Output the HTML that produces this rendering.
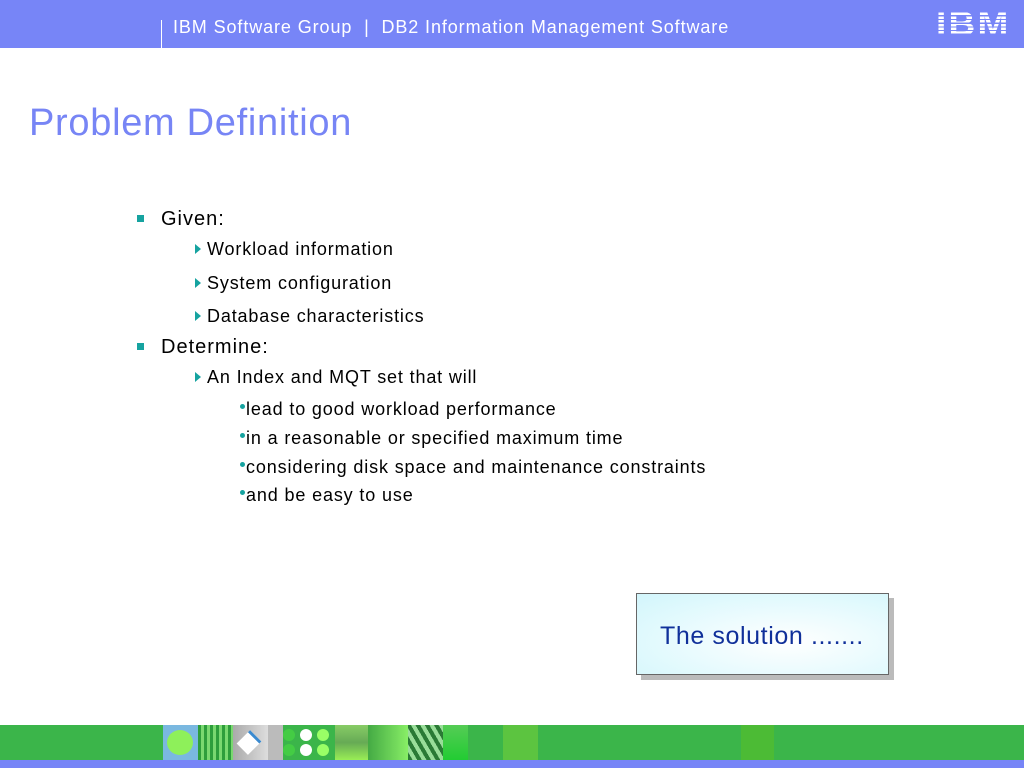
<!DOCTYPE html>
<html><head><meta charset="utf-8"><style>
body{margin:0;width:1024px;height:768px;position:relative;background:#fff;font-family:"Liberation Sans",sans-serif;overflow:hidden}
.hdr{position:absolute;left:0;top:0;width:1024px;height:48px;background:#7785f7}
.hdr .t{position:absolute;left:173px;top:17px;color:#fff;font-size:18px;letter-spacing:0.9px}
.bar{position:absolute;background:#fff;width:1px}
.ibm{position:absolute;left:936px;top:9px;width:74px;height:30px;color:#fff;font:bold 33px "Liberation Sans",sans-serif;letter-spacing:2px;line-height:30px;transform:scaleX(1.12);transform-origin:left}
.ibmw{position:absolute;left:936px;top:9px;width:74px;height:30px;background:repeating-linear-gradient(to bottom,transparent 0 2.5px,#7785f7 2.5px 3.7px)}
h1{position:absolute;left:29px;top:102px;margin:0;font-weight:normal;font-size:38px;color:#7785f5;letter-spacing:0.7px}
.l1{position:absolute;left:161px;font-size:20px;color:#000;letter-spacing:1px}
.l1:before{content:"";position:absolute;left:-24px;top:7px;width:7px;height:7px;background:#16a3a0}
.l2{position:absolute;left:207px;font-size:18px;color:#000;letter-spacing:0.85px}
.l2:before{content:"";position:absolute;left:-12px;top:5px;border-left:6px solid #16a3a0;border-top:5px solid transparent;border-bottom:5px solid transparent}
.l3{position:absolute;left:246px;font-size:18px;color:#000;letter-spacing:0.86px}
.l3 b{position:absolute;left:-6px;top:5px;width:5px;height:5px;border-radius:50%;background:#16a3a0}
.box{position:absolute;left:636px;top:593px;width:251px;height:80px;border:1px solid #666;background:radial-gradient(ellipse at 60% 60%,#fff 0%,#dff9fd 70%,#d2f5fb 100%);box-shadow:5px 5px 0 #bbb}
.box span{position:absolute;left:23px;top:28px;font-size:25px;color:#10309a;letter-spacing:0.6px}
.foot{position:absolute;left:0;top:725px;width:1024px;height:35px;background:#3bb54a}
.fb{position:absolute;left:0;top:760px;width:1024px;height:8px;background:#7785f7}
.s{position:absolute;top:0;height:35px}
</style></head><body>
<div class="hdr">
<div class="bar" style="left:161px;top:20px;height:28px"></div>
<div class="t">IBM Software Group &nbsp;|&nbsp; DB2 Information Management Software</div>
<div class="ibm">IBM</div><div class="ibmw"></div>
</div>
<h1>Problem Definition</h1>
<div class="l1" style="top:208px">Given:</div>
<div class="l2" style="top:239px">Workload information</div>
<div class="l2" style="top:273px">System configuration</div>
<div class="l2" style="top:306px">Database characteristics</div>
<div class="l1" style="top:336px">Determine:</div>
<div class="l2" style="top:367px">An Index and MQT set that will</div>
<div class="l3" style="top:399px"><b></b>lead to good workload performance</div>
<div class="l3" style="top:428px"><b></b>in a reasonable or specified maximum time</div>
<div class="l3" style="top:457px"><b></b>considering disk space and maintenance constraints</div>
<div class="l3" style="top:485px"><b></b>and be easy to use</div>
<div class="box"><span>The solution .......</span></div>
<div class="foot">
<div class="s" style="left:163px;width:35px;background:#7ab8e0"><div style="position:absolute;left:4px;top:5px;width:26px;height:25px;border-radius:50%;background:#8ef05a"></div></div>
<div class="s" style="left:198px;width:35px;background:repeating-linear-gradient(90deg,#2e9e3c 0 3px,#7ad870 3px 6px)"></div>
<div class="s" style="left:233px;width:35px;background:linear-gradient(90deg,#aaa,#ddd)"><div style="position:absolute;left:8px;top:8px;width:16px;height:16px;background:#fff;transform:rotate(45deg);border-top:3px solid #3a8ad0"></div></div>
<div class="s" style="left:268px;width:15px;background:#bbb"></div>
<div class="s" style="left:283px;width:52px;background:#3bb54a">
<div style="position:absolute;left:0;top:4px;width:12px;height:12px;border-radius:50%;background:#4c4"></div>
<div style="position:absolute;left:17px;top:4px;width:12px;height:12px;border-radius:50%;background:#fff"></div>
<div style="position:absolute;left:34px;top:4px;width:12px;height:12px;border-radius:50%;background:#9f6"></div>
<div style="position:absolute;left:0;top:19px;width:12px;height:12px;border-radius:50%;background:#4c4"></div>
<div style="position:absolute;left:17px;top:19px;width:12px;height:12px;border-radius:50%;background:#fff"></div>
<div style="position:absolute;left:34px;top:19px;width:12px;height:12px;border-radius:50%;background:#9f6"></div></div>
<div class="s" style="left:335px;width:33px;background:linear-gradient(#8c6 0,#6a5 50%,#9e5 100%)"></div>
<div class="s" style="left:368px;width:40px;background:linear-gradient(90deg,#4a4,#8e6)"></div>
<div class="s" style="left:408px;width:35px;background:repeating-linear-gradient(60deg,#2a7a35 0 4px,#9d9 4px 8px)"></div>
<div class="s" style="left:443px;width:25px;background:linear-gradient(#5c5,#2c3)"></div>
<div class="s" style="left:503px;width:35px;background:#5cc440"></div>
<div class="s" style="left:741px;width:33px;background:#4cbb35"></div>
</div>
<div class="fb"></div>
</body></html>
